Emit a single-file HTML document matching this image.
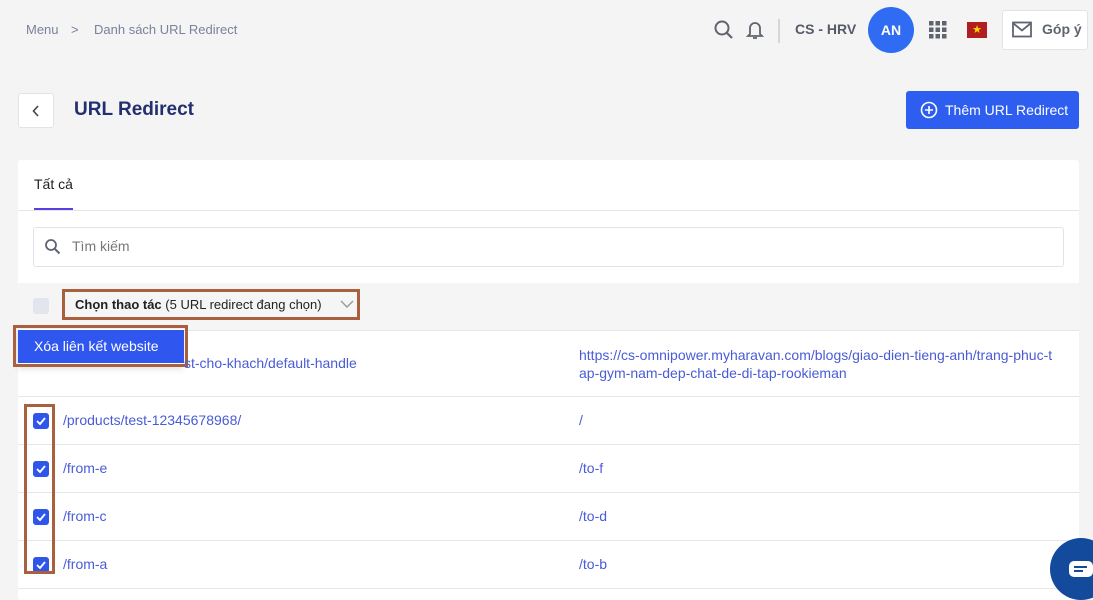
<!DOCTYPE html>
<html><head><meta charset="utf-8"><style>
*{box-sizing:border-box;margin:0;padding:0}
body{width:1093px;height:600px;overflow:hidden;background:#f4f4f5;font-family:"Liberation Sans",sans-serif;position:relative;color:#222}
.a{position:absolute}
.link{color:#4a5bd6;font-size:14px}
.cb{position:absolute;left:33px;width:16px;height:16px;border-radius:3px;background:#2f56e8}
.cb svg{position:absolute;left:2px;top:2px}
.line{position:absolute;left:18px;width:1061px;height:1px;background:#e6e6ea}
.box{position:absolute;border:3px solid #a9603f}
</style></head><body>
<div class="a" style="left:26px;top:22px;font-size:13px;color:#7a819a">Menu</div>
<div class="a" style="left:71px;top:22px;font-size:13px;color:#7a819a">&gt;</div>
<div class="a" style="left:94px;top:22px;font-size:13px;color:#7a819a">Danh sách URL Redirect</div>

<svg class="a" style="left:713px;top:19px" width="22" height="22" viewBox="0 0 22 22"><circle cx="9" cy="9" r="6.5" fill="none" stroke="#5f6470" stroke-width="2"/><path d="M14 14l5 5" stroke="#5f6470" stroke-width="2.2"/></svg>
<svg class="a" style="left:745px;top:19px" width="20" height="22" viewBox="0 0 20 22"><path d="M5 15V9a5 5 0 0110 0v6l2 2H3z" fill="none" stroke="#5f6470" stroke-width="1.8"/><path d="M8 19h4" stroke="#5f6470" stroke-width="1.8"/></svg>
<div class="a" style="left:778px;top:19px;width:2px;height:24px;background:#d5d6da"></div>
<div class="a" style="left:795px;top:21px;font-size:14px;font-weight:bold;color:#555a66">CS - HRV</div>
<div class="a" style="left:868px;top:7px;width:46px;height:46px;border-radius:50%;background:#2f6cf3;color:#fff;font-weight:bold;font-size:14px;text-align:center;line-height:46px">AN</div>
<svg class="a" style="left:929px;top:21px" width="18" height="18" viewBox="0 0 18 18" fill="#5f6470"><rect x="0" y="0" width="4.5" height="4.5"/><rect x="6.5" y="0" width="4.5" height="4.5"/><rect x="13" y="0" width="4.5" height="4.5"/><rect x="0" y="6.5" width="4.5" height="4.5"/><rect x="6.5" y="6.5" width="4.5" height="4.5"/><rect x="13" y="6.5" width="4.5" height="4.5"/><rect x="0" y="13" width="4.5" height="4.5"/><rect x="6.5" y="13" width="4.5" height="4.5"/><rect x="13" y="13" width="4.5" height="4.5"/></svg>
<div class="a" style="left:967px;top:22px;width:20px;height:16px;background:#b21e1e;color:#ffd400;font-size:11px;text-align:center;line-height:16px">★</div>
<div class="a" style="left:1002px;top:10px;width:86px;height:40px;background:#fff;border:1px solid #e2e3e6;border-radius:3px"></div>
<svg class="a" style="left:1012px;top:21px" width="20" height="17" viewBox="0 0 20 17"><rect x="1" y="1.5" width="18" height="14" fill="none" stroke="#5f6470" stroke-width="1.8"/><path d="M1.5 2.5l8.5 7 8.5-7" fill="none" stroke="#5f6470" stroke-width="1.8"/></svg>
<div class="a" style="left:1042px;top:21px;font-size:14px;font-weight:bold;color:#5f6470">Góp ý</div>

<div class="a" style="left:18px;top:93px;width:36px;height:35px;background:#fff;border:1px solid #e2e3e6;border-radius:3px"></div>
<svg class="a" style="left:31px;top:104px" width="10" height="14" viewBox="0 0 10 14"><path d="M7 2L2.5 7 7 12" fill="none" stroke="#444" stroke-width="1.6"/></svg>
<div class="a" style="left:74px;top:99px;font-size:19px;font-weight:bold;color:#232f6e">URL Redirect</div>
<div class="a" style="left:906px;top:91px;width:173px;height:38px;background:#2d5ef0;border-radius:3px;color:#fff;font-size:14px;line-height:38px;padding-left:39px">Thêm URL Redirect</div>
<svg class="a" style="left:920px;top:101px" width="18" height="18" viewBox="0 0 18 18"><circle cx="9" cy="9" r="7.5" fill="none" stroke="#fff" stroke-width="1.6"/><path d="M9 5v8M5 9h8" stroke="#fff" stroke-width="1.6"/></svg>

<div class="a" style="left:18px;top:160px;width:1061px;height:440px;background:#fff;border-radius:3px"></div>
<div class="a" style="left:34px;top:176px;font-size:14px;color:#222">Tất cả</div>
<div class="a" style="left:34px;top:208px;width:39px;height:3px;background:#5b3fe0"></div>
<div class="line" style="top:210px"></div>
<div class="a" style="left:33px;top:227px;width:1031px;height:40px;border:1px solid #e2e3e6;border-radius:3px"></div>
<svg class="a" style="left:44px;top:238px" width="18" height="18" viewBox="0 0 18 18"><circle cx="7" cy="7" r="5" fill="none" stroke="#5f6470" stroke-width="1.8"/><path d="M11 11l4.5 4.5" stroke="#5f6470" stroke-width="2"/></svg>
<div class="a" style="left:72px;top:238px;font-size:14px;color:#777">Tìm kiếm</div>

<div class="a" style="left:18px;top:283px;width:1061px;height:47px;background:#f5f5f6"></div>
<div class="a" style="left:33px;top:298px;width:16px;height:16px;border-radius:3px;background:#e3e5ec"></div>
<div class="a" style="left:75px;top:297px;font-size:13px;color:#222"><b>Chọn thao tác</b> (5 URL redirect đang chọn)</div>
<svg class="a" style="left:340px;top:299px" width="14" height="10" viewBox="0 0 14 10"><path d="M1 2l6 6 6-6" fill="none" stroke="#999" stroke-width="1.4"/></svg>
<div class="box" style="left:62px;top:289px;width:298px;height:31px"></div>
<div class="line" style="top:330px"></div>

<div class="a" style="left:18px;top:329px;width:165px;height:38px;background:#fff;box-shadow:0 2px 6px rgba(0,0,0,.12)"></div>
<div class="a" style="left:18px;top:330px;width:166px;height:33px;background:#2f56ee;color:#fff;font-size:14px;line-height:33px;padding-left:16px">Xóa liên kết website</div>
<div class="box" style="left:13px;top:325px;width:175px;height:42px"></div>

<div class="a link" style="left:184px;top:355px">st-cho-khach/default-handle</div>
<div class="a link" style="left:579px;top:346px;line-height:18px">https://cs-omnipower.myharavan.com/blogs/giao-dien-tieng-anh/trang-phuc-t<br>ap-gym-nam-dep-chat-de-di-tap-rookieman</div>
<div class="line" style="top:396px"></div>

<div class="cb" style="top:413px"><svg width="12" height="12" viewBox="0 0 12 12"><path d="M2 6l3 3 5-6" fill="none" stroke="#fff" stroke-width="1.8"/></svg></div>
<div class="a link" style="left:63px;top:412px">/products/test-12345678968/</div>
<div class="a link" style="left:579px;top:412px">/</div>
<div class="line" style="top:444px"></div>
<div class="cb" style="top:461px"><svg width="12" height="12" viewBox="0 0 12 12"><path d="M2 6l3 3 5-6" fill="none" stroke="#fff" stroke-width="1.8"/></svg></div>
<div class="a link" style="left:63px;top:460px">/from-e</div>
<div class="a link" style="left:579px;top:460px">/to-f</div>
<div class="line" style="top:492px"></div>
<div class="cb" style="top:509px"><svg width="12" height="12" viewBox="0 0 12 12"><path d="M2 6l3 3 5-6" fill="none" stroke="#fff" stroke-width="1.8"/></svg></div>
<div class="a link" style="left:63px;top:508px">/from-c</div>
<div class="a link" style="left:579px;top:508px">/to-d</div>
<div class="line" style="top:540px"></div>
<div class="cb" style="top:557px"><svg width="12" height="12" viewBox="0 0 12 12"><path d="M2 6l3 3 5-6" fill="none" stroke="#fff" stroke-width="1.8"/></svg></div>
<div class="a link" style="left:63px;top:556px">/from-a</div>
<div class="a link" style="left:579px;top:556px">/to-b</div>
<div class="line" style="top:588px"></div>
<div class="box" style="left:24px;top:404px;width:31px;height:170px"></div>

<div class="a" style="left:1050px;top:538px;width:62px;height:62px;border-radius:50%;background:#134a9b"></div>
<svg class="a" style="left:1069px;top:561px" width="24" height="18" viewBox="0 0 24 18"><rect x="0" y="0" width="24" height="16" rx="5" fill="#fff"/><path d="M5 6h13M5 10h9" stroke="#134a9b" stroke-width="2"/></svg>
</body></html>
